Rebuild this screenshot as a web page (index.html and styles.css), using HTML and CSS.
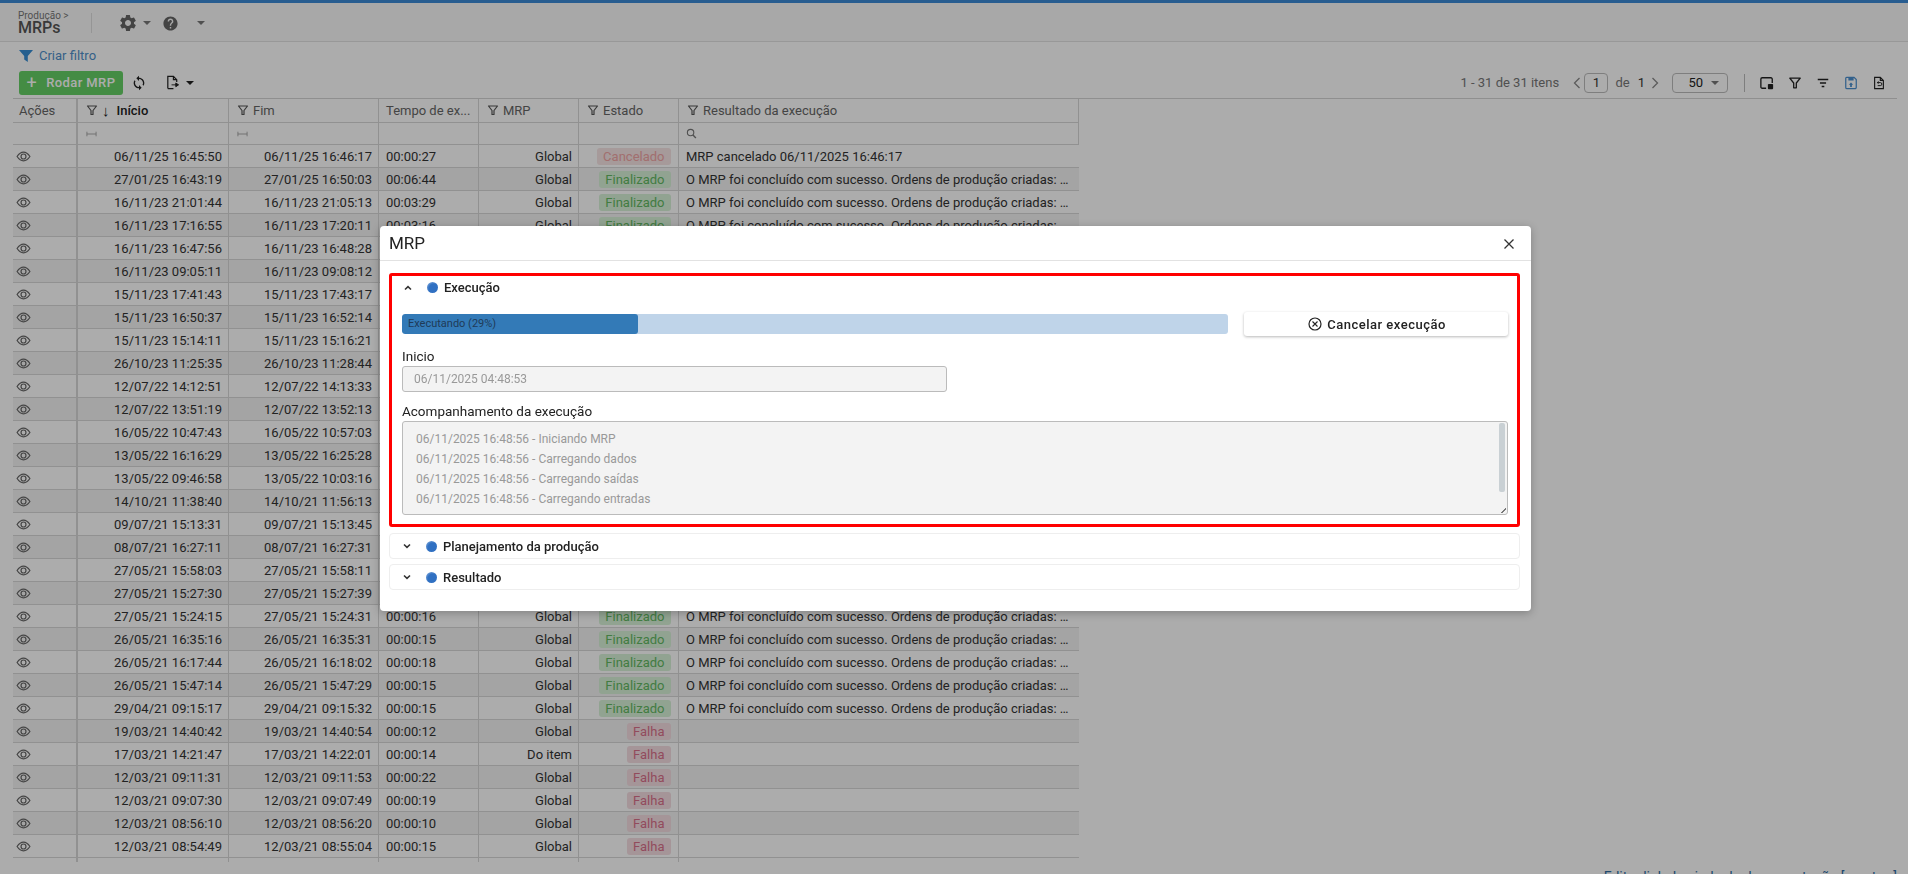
FILE: index.html
```html
<!DOCTYPE html>
<html lang="pt-BR">
<head>
<meta charset="utf-8">
<title>MRPs</title>
<link rel="stylesheet" href="styles.css">
</head>
<body>
<svg class="defs" aria-hidden="true">
  <symbol id="i-eye" viewBox="0 0 16 12"><path d="M1 6c2-3 4.500-4.800 7-4.800S13 3 15 6c-2 3-4.500 4.800-7 4.800S3 9 1 6z" fill="none" stroke="currentColor" stroke-width="1.300"/><circle cx="8" cy="6" r="2.700" fill="none" stroke="currentColor" stroke-width="1.300"/></symbol>
  <symbol id="i-filter" viewBox="0 0 12 12"><path d="M1.500 2h9L7 6.500V10.500H5V6.500z" fill="none" stroke="currentColor" stroke-width="1.200" stroke-linejoin="round"/></symbol>
  <symbol id="i-range" viewBox="0 0 12 8"><path d="M1 1.500v5M11 1.500v5M1 4h10" fill="none" stroke="currentColor" stroke-width=".9"/></symbol>
  <symbol id="i-search" viewBox="0 0 12 12"><circle cx="5" cy="5" r="3.500" fill="none" stroke="currentColor" stroke-width="1.200"/><path d="M7.600 7.600l3.200 3.400" stroke="currentColor" stroke-width="1.500"/></symbol>
  <symbol id="i-gear" viewBox="0 0 24 24"><path fill="currentColor" d="M19.140 12.940c.04-.3.06-.61.06-.94 0-.32-.02-.64-.07-.94l2.030-1.580a.49.49 0 0 0 .12-.61l-1.920-3.320a.488.488 0 0 0-.59-.22l-2.390.96c-.5-.38-1.030-.7-1.620-.94l-.36-2.540a.484.484 0 0 0-.48-.41h-3.840c-.24 0-.43.17-.47.41l-.36 2.540c-.59.24-1.130.57-1.620.94l-2.390-.96c-.22-.08-.47 0-.59.22L2.740 8.870c-.12.21-.08.47.12.61l2.030 1.580c-.05.3-.09.63-.09.94s.02.64.07.94l-2.030 1.580a.49.49 0 0 0-.12.61l1.920 3.320c.12.22.37.29.59.22l2.390-.96c.5.38 1.030.7 1.620.94l.36 2.540c.05.24.24.41.48.41h3.840c.24 0 .44-.17.47-.41l.36-2.540c.59-.24 1.130-.56 1.620-.94l2.390.96c.22.08.47 0 .59-.22l1.920-3.320c.12-.22.07-.47-.12-.61l-2.010-1.580zM12 15.600c-1.980 0-3.600-1.620-3.600-3.600s1.620-3.600 3.600-3.600 3.600 1.620 3.600 3.600-1.620 3.600-3.600 3.600z"/></symbol>
  <symbol id="i-help" viewBox="0 0 24 24"><path fill="currentColor" d="M12 2C6.480 2 2 6.480 2 12s4.480 10 10 10 10-4.480 10-10S17.520 2 12 2zm1 17h-2v-2h2v2zm2.070-7.750l-.9.92C13.450 12.900 13 13.500 13 15h-2v-.5c0-1.100.45-2.100 1.170-2.830l1.240-1.260c.37-.36.59-.86.59-1.410 0-1.100-.9-2-2-2s-2 .9-2 2H8c0-2.210 1.790-4 4-4s4 1.790 4 4c0 .88-.36 1.680-.93 2.250z"/></symbol>
  <symbol id="i-sync" viewBox="0 0 24 24"><path fill="currentColor" d="M12 4V1L8 5l4 4V6c3.310 0 6 2.690 6 6 0 1.010-.25 1.970-.7 2.800l1.460 1.460C19.540 15.030 20 13.570 20 12c0-4.420-3.580-8-8-8zm0 14c-3.310 0-6-2.690-6-6 0-1.010.25-1.970.7-2.800L5.240 7.740C4.460 8.970 4 10.430 4 12c0 4.420 3.580 8 8 8v3l4-4-4-4v3z"/></symbol>
  <symbol id="i-export" viewBox="0 0 16 16"><path d="M3 14.500V1.500h6l3.500 3.500v2.500M9 1.500V5h3.500M3 14.500h6" fill="none" stroke="currentColor" stroke-width="1.300"/><path d="M7 10.500h6M11.500 8.500l3 2-3 2z" fill="currentColor" stroke="currentColor"/></symbol>
  <symbol id="i-panel" viewBox="0 0 16 16"><path d="M7 14H2.500A1.500 1.500 0 0 1 1 12.500v-9A1.500 1.500 0 0 1 2.500 2h10A1.500 1.500 0 0 1 14 3.500V8" fill="none" stroke="currentColor" stroke-width="1.500"/><rect x="9" y="9" width="6" height="6" rx="1" fill="currentColor"/></symbol>
  <symbol id="i-filter2" viewBox="0 0 16 16"><path d="M2 2.500h12L9.500 8v5.500h-3V8z" fill="none" stroke="currentColor" stroke-width="1.500" stroke-linejoin="round"/></symbol>
  <symbol id="i-lines" viewBox="0 0 16 16"><path d="M2 4h12M4.500 8h7M6.500 12h3" fill="none" stroke="currentColor" stroke-width="1.600"/></symbol>
  <symbol id="i-save" viewBox="0 0 16 16"><path d="M2 2.500A1 1 0 0 1 3 1.500h8.500L14 4v9a1.500 1.500 0 0 1-1.500 1.500h-9A1.500 1.500 0 0 1 2 13z" fill="none" stroke="currentColor" stroke-width="1.400"/><path d="M5 2h6v3H5zM8 7.500l2.500 2.500H9v2.500H7V10H5.500z" fill="currentColor"/></symbol>
  <symbol id="i-reset" viewBox="0 0 16 16"><path d="M3 14.500V1.500h6.500L13 5v9.500zM9.500 1.500V5H13" fill="none" stroke="currentColor" stroke-width="1.300"/><path d="M6 7.500h3.500a1.700 1.700 0 0 1 0 3.500H6.500M6 7.500l1.500-1.200M6 7.500l1.500 1.200" fill="none" stroke="currentColor" stroke-width="1.100"/></symbol>
  <symbol id="i-x" viewBox="0 0 12 12"><path d="M1.500 1.500l9 9M10.500 1.500l-9 9" fill="none" stroke="currentColor" stroke-width="1.300"/></symbol>
  <symbol id="i-xc" viewBox="0 0 14 14"><circle cx="7" cy="7" r="6" fill="none" stroke="currentColor" stroke-width="1.200"/><path d="M4.500 4.500l5 5M9.500 4.500l-5 5" stroke="currentColor" stroke-width="1.100"/></symbol>
  <symbol id="i-up" viewBox="0 0 8 6"><path d="M1 4.500L4 1.700l3 2.800" fill="none" stroke="currentColor" stroke-width="1.600"/></symbol>
  <symbol id="i-down" viewBox="0 0 8 6"><path d="M1 1.500L4 4.300l3-2.800" fill="none" stroke="currentColor" stroke-width="1.600"/></symbol>
  <symbol id="i-funnel" viewBox="0 0 14 12"><path d="M0 0h14L8.800 6v6L5.200 9.600V6z" fill="currentColor"/></symbol>
  <symbol id="i-lt" viewBox="0 0 8 12"><path d="M6.500 1L1.500 6l5 5" fill="none" stroke="currentColor" stroke-width="1.300"/></symbol>
  <symbol id="i-gt" viewBox="0 0 8 12"><path d="M1.500 1l5 5-5 5" fill="none" stroke="currentColor" stroke-width="1.300"/></symbol>
</svg>

<div class="topbar"></div>
<header class="appbar">
  <div class="crumbs">
    <div class="crumb">Produção &gt;</div>
    <div class="page-title">MRPs</div>
  </div>
  <div class="appbar-sep"></div>
  <svg class="app-icon"><use href="#i-gear"/></svg><span class="caret caret-a"></span>
  <svg class="app-icon help"><use href="#i-help"/></svg><span class="caret caret-b"></span>
</header>

<div class="filter-link"><svg class="funnel"><use href="#i-funnel"/></svg><span>Criar filtro</span></div>

<div class="toolbar">
  <button class="run"><span class="plus">+</span>Rodar MRP</button>
  <svg class="tool sync"><use href="#i-sync"/></svg>
  <svg class="tool export"><use href="#i-export"/></svg><span class="caret dark"></span>
  <div class="pager">
    <span class="count">1 - 31 de 31 itens</span>
    <svg class="chev"><use href="#i-lt"/></svg>
    <span class="page-box">1</span>
    <span class="de">de</span><span class="total">1</span>
    <svg class="chev next"><use href="#i-gt"/></svg>
    <span class="size">50<span class="caret"></span></span>
    <span class="pager-sep"></span>
    <svg class="grid-icon"><use href="#i-panel"/></svg>
    <svg class="grid-icon"><use href="#i-filter2"/></svg>
    <svg class="grid-icon"><use href="#i-lines"/></svg>
    <svg class="grid-icon blue"><use href="#i-save"/></svg>
    <svg class="grid-icon"><use href="#i-reset"/></svg>
  </div>
</div>

<main class="grid-wrap">
<table class="grid">
  <colgroup><col class="c0"><col class="c1"><col class="c2"><col class="c3"><col class="c4"><col class="c5"><col class="c6"></colgroup>
  <thead>
    <tr class="head">
      <th class="act">Ações</th>
      <th class="sorted"><svg class="f"><use href="#i-filter"/></svg><span class="arrow">&#8595;</span>Início</th>
      <th><svg class="f"><use href="#i-filter"/></svg>Fim</th>
      <th>Tempo de ex...</th>
      <th><svg class="f"><use href="#i-filter"/></svg>MRP</th>
      <th><svg class="f"><use href="#i-filter"/></svg>Estado</th>
      <th><svg class="f"><use href="#i-filter"/></svg>Resultado da execução</th>
    </tr>
    <tr class="filters">
      <th class="act"></th>
      <th><svg class="rng"><use href="#i-range"/></svg></th>
      <th><svg class="rng"><use href="#i-range"/></svg></th>
      <th></th><th></th><th></th>
      <th><svg class="srch"><use href="#i-search"/></svg></th>
    </tr>
  </thead>
  <tbody>
<tr><td class="act"><svg class="eye"><use href="#i-eye"/></svg></td><td class="r">06/11/25 16:45:50</td><td class="r">06/11/25 16:46:17</td><td>00:00:27</td><td class="r">Global</td><td class="r"><span class="tag st-cancel">Cancelado</span></td><td class="res">MRP cancelado 06/11/2025 16:46:17</td></tr>
<tr><td class="act"><svg class="eye"><use href="#i-eye"/></svg></td><td class="r">27/01/25 16:43:19</td><td class="r">27/01/25 16:50:03</td><td>00:06:44</td><td class="r">Global</td><td class="r"><span class="tag st-ok">Finalizado</span></td><td class="res">O MRP foi concluído com sucesso. Ordens de produção criadas: 12 e mais</td></tr>
<tr><td class="act"><svg class="eye"><use href="#i-eye"/></svg></td><td class="r">16/11/23 21:01:44</td><td class="r">16/11/23 21:05:13</td><td>00:03:29</td><td class="r">Global</td><td class="r"><span class="tag st-ok">Finalizado</span></td><td class="res">O MRP foi concluído com sucesso. Ordens de produção criadas: 12 e mais</td></tr>
<tr><td class="act"><svg class="eye"><use href="#i-eye"/></svg></td><td class="r">16/11/23 17:16:55</td><td class="r">16/11/23 17:20:11</td><td>00:03:16</td><td class="r">Global</td><td class="r"><span class="tag st-ok">Finalizado</span></td><td class="res">O MRP foi concluído com sucesso. Ordens de produção criadas: 12 e mais</td></tr>
<tr><td class="act"><svg class="eye"><use href="#i-eye"/></svg></td><td class="r">16/11/23 16:47:56</td><td class="r">16/11/23 16:48:28</td><td>00:00:32</td><td class="r">Global</td><td class="r"><span class="tag st-ok">Finalizado</span></td><td class="res">O MRP foi concluído com sucesso.</td></tr>
<tr><td class="act"><svg class="eye"><use href="#i-eye"/></svg></td><td class="r">16/11/23 09:05:11</td><td class="r">16/11/23 09:08:12</td><td>00:03:01</td><td class="r">Global</td><td class="r"><span class="tag st-ok">Finalizado</span></td><td class="res">O MRP foi concluído com sucesso.</td></tr>
<tr><td class="act"><svg class="eye"><use href="#i-eye"/></svg></td><td class="r">15/11/23 17:41:43</td><td class="r">15/11/23 17:43:17</td><td>00:01:34</td><td class="r">Global</td><td class="r"><span class="tag st-ok">Finalizado</span></td><td class="res">O MRP foi concluído com sucesso.</td></tr>
<tr><td class="act"><svg class="eye"><use href="#i-eye"/></svg></td><td class="r">15/11/23 16:50:37</td><td class="r">15/11/23 16:52:14</td><td>00:01:37</td><td class="r">Global</td><td class="r"><span class="tag st-ok">Finalizado</span></td><td class="res">O MRP foi concluído com sucesso.</td></tr>
<tr><td class="act"><svg class="eye"><use href="#i-eye"/></svg></td><td class="r">15/11/23 15:14:11</td><td class="r">15/11/23 15:16:21</td><td>00:02:10</td><td class="r">Global</td><td class="r"><span class="tag st-ok">Finalizado</span></td><td class="res">O MRP foi concluído com sucesso.</td></tr>
<tr><td class="act"><svg class="eye"><use href="#i-eye"/></svg></td><td class="r">26/10/23 11:25:35</td><td class="r">26/10/23 11:28:44</td><td>00:03:09</td><td class="r">Global</td><td class="r"><span class="tag st-ok">Finalizado</span></td><td class="res">O MRP foi concluído com sucesso.</td></tr>
<tr><td class="act"><svg class="eye"><use href="#i-eye"/></svg></td><td class="r">12/07/22 14:12:51</td><td class="r">12/07/22 14:13:33</td><td>00:00:42</td><td class="r">Global</td><td class="r"><span class="tag st-ok">Finalizado</span></td><td class="res">O MRP foi concluído com sucesso.</td></tr>
<tr><td class="act"><svg class="eye"><use href="#i-eye"/></svg></td><td class="r">12/07/22 13:51:19</td><td class="r">12/07/22 13:52:13</td><td>00:00:54</td><td class="r">Global</td><td class="r"><span class="tag st-ok">Finalizado</span></td><td class="res">O MRP foi concluído com sucesso.</td></tr>
<tr><td class="act"><svg class="eye"><use href="#i-eye"/></svg></td><td class="r">16/05/22 10:47:43</td><td class="r">16/05/22 10:57:03</td><td>00:09:20</td><td class="r">Global</td><td class="r"><span class="tag st-ok">Finalizado</span></td><td class="res">O MRP foi concluído com sucesso.</td></tr>
<tr><td class="act"><svg class="eye"><use href="#i-eye"/></svg></td><td class="r">13/05/22 16:16:29</td><td class="r">13/05/22 16:25:28</td><td>00:08:59</td><td class="r">Global</td><td class="r"><span class="tag st-ok">Finalizado</span></td><td class="res">O MRP foi concluído com sucesso.</td></tr>
<tr><td class="act"><svg class="eye"><use href="#i-eye"/></svg></td><td class="r">13/05/22 09:46:58</td><td class="r">13/05/22 10:03:16</td><td>00:16:18</td><td class="r">Global</td><td class="r"><span class="tag st-ok">Finalizado</span></td><td class="res">O MRP foi concluído com sucesso.</td></tr>
<tr><td class="act"><svg class="eye"><use href="#i-eye"/></svg></td><td class="r">14/10/21 11:38:40</td><td class="r">14/10/21 11:56:13</td><td>00:17:33</td><td class="r">Global</td><td class="r"><span class="tag st-ok">Finalizado</span></td><td class="res">O MRP foi concluído com sucesso.</td></tr>
<tr><td class="act"><svg class="eye"><use href="#i-eye"/></svg></td><td class="r">09/07/21 15:13:31</td><td class="r">09/07/21 15:13:45</td><td>00:00:14</td><td class="r">Global</td><td class="r"><span class="tag st-ok">Finalizado</span></td><td class="res">O MRP foi concluído com sucesso.</td></tr>
<tr><td class="act"><svg class="eye"><use href="#i-eye"/></svg></td><td class="r">08/07/21 16:27:11</td><td class="r">08/07/21 16:27:31</td><td>00:00:20</td><td class="r">Global</td><td class="r"><span class="tag st-ok">Finalizado</span></td><td class="res">O MRP foi concluído com sucesso.</td></tr>
<tr><td class="act"><svg class="eye"><use href="#i-eye"/></svg></td><td class="r">27/05/21 15:58:03</td><td class="r">27/05/21 15:58:11</td><td>00:00:08</td><td class="r">Global</td><td class="r"><span class="tag st-ok">Finalizado</span></td><td class="res">O MRP foi concluído com sucesso.</td></tr>
<tr><td class="act"><svg class="eye"><use href="#i-eye"/></svg></td><td class="r">27/05/21 15:27:30</td><td class="r">27/05/21 15:27:39</td><td>00:00:09</td><td class="r">Global</td><td class="r"><span class="tag st-ok">Finalizado</span></td><td class="res">O MRP foi concluído com sucesso.</td></tr>
<tr><td class="act"><svg class="eye"><use href="#i-eye"/></svg></td><td class="r">27/05/21 15:24:15</td><td class="r">27/05/21 15:24:31</td><td>00:00:16</td><td class="r">Global</td><td class="r"><span class="tag st-ok">Finalizado</span></td><td class="res">O MRP foi concluído com sucesso. Ordens de produção criadas: 12 e mais</td></tr>
<tr><td class="act"><svg class="eye"><use href="#i-eye"/></svg></td><td class="r">26/05/21 16:35:16</td><td class="r">26/05/21 16:35:31</td><td>00:00:15</td><td class="r">Global</td><td class="r"><span class="tag st-ok">Finalizado</span></td><td class="res">O MRP foi concluído com sucesso. Ordens de produção criadas: 12 e mais</td></tr>
<tr><td class="act"><svg class="eye"><use href="#i-eye"/></svg></td><td class="r">26/05/21 16:17:44</td><td class="r">26/05/21 16:18:02</td><td>00:00:18</td><td class="r">Global</td><td class="r"><span class="tag st-ok">Finalizado</span></td><td class="res">O MRP foi concluído com sucesso. Ordens de produção criadas: 12 e mais</td></tr>
<tr><td class="act"><svg class="eye"><use href="#i-eye"/></svg></td><td class="r">26/05/21 15:47:14</td><td class="r">26/05/21 15:47:29</td><td>00:00:15</td><td class="r">Global</td><td class="r"><span class="tag st-ok">Finalizado</span></td><td class="res">O MRP foi concluído com sucesso. Ordens de produção criadas: 12 e mais</td></tr>
<tr><td class="act"><svg class="eye"><use href="#i-eye"/></svg></td><td class="r">29/04/21 09:15:17</td><td class="r">29/04/21 09:15:32</td><td>00:00:15</td><td class="r">Global</td><td class="r"><span class="tag st-ok">Finalizado</span></td><td class="res">O MRP foi concluído com sucesso. Ordens de produção criadas: 12 e mais</td></tr>
<tr><td class="act"><svg class="eye"><use href="#i-eye"/></svg></td><td class="r">19/03/21 14:40:42</td><td class="r">19/03/21 14:40:54</td><td>00:00:12</td><td class="r">Global</td><td class="r"><span class="tag st-fail">Falha</span></td><td class="res"></td></tr>
<tr><td class="act"><svg class="eye"><use href="#i-eye"/></svg></td><td class="r">17/03/21 14:21:47</td><td class="r">17/03/21 14:22:01</td><td>00:00:14</td><td class="r">Do item</td><td class="r"><span class="tag st-fail">Falha</span></td><td class="res"></td></tr>
<tr><td class="act"><svg class="eye"><use href="#i-eye"/></svg></td><td class="r">12/03/21 09:11:31</td><td class="r">12/03/21 09:11:53</td><td>00:00:22</td><td class="r">Global</td><td class="r"><span class="tag st-fail">Falha</span></td><td class="res"></td></tr>
<tr><td class="act"><svg class="eye"><use href="#i-eye"/></svg></td><td class="r">12/03/21 09:07:30</td><td class="r">12/03/21 09:07:49</td><td>00:00:19</td><td class="r">Global</td><td class="r"><span class="tag st-fail">Falha</span></td><td class="res"></td></tr>
<tr><td class="act"><svg class="eye"><use href="#i-eye"/></svg></td><td class="r">12/03/21 08:56:10</td><td class="r">12/03/21 08:56:20</td><td>00:00:10</td><td class="r">Global</td><td class="r"><span class="tag st-fail">Falha</span></td><td class="res"></td></tr>
<tr><td class="act"><svg class="eye"><use href="#i-eye"/></svg></td><td class="r">12/03/21 08:54:49</td><td class="r">12/03/21 08:55:04</td><td>00:00:15</td><td class="r">Global</td><td class="r"><span class="tag st-fail">Falha</span></td><td class="res"></td></tr>
<tr class="stub"><td class="act"></td><td></td><td></td><td></td><td></td><td></td><td class="res"></td></tr>
  </tbody>
</table>
</main>
<footer class="page-foot">Editar link de ajuda da documentação [mostrar]</footer>

<div class="overlay"></div>
<section class="modal">
  <div class="modal-head"><h2>MRP</h2><svg class="close"><use href="#i-x"/></svg></div>
  <div class="modal-body">
    <div class="acc open">
      <div class="acc-head"><svg class="chev-i"><use href="#i-up"/></svg><span class="globe"></span><span class="acc-title">Execução</span></div>
      <div class="acc-body">
        <div class="progress-row">
          <div class="progress"><div class="bar" style="width:28.6%">Executando (29%)</div></div>
          <button class="cancel"><svg class="xc"><use href="#i-xc"/></svg>Cancelar execução</button>
        </div>
        <label class="lbl first">Inicio</label>
        <div class="input">06/11/2025 04:48:53</div>
        <label class="lbl">Acompanhamento da execução</label>
        <div class="log">
          <div>06/11/2025 16:48:56 - Iniciando MRP</div>
          <div>06/11/2025 16:48:56 - Carregando dados</div>
          <div>06/11/2025 16:48:56 - Carregando saídas</div>
          <div>06/11/2025 16:48:56 - Carregando entradas</div>
          <span class="thumb"></span><span class="grip"></span>
        </div>
      </div>
    </div>
    <div class="acc closed">
      <div class="acc-head"><svg class="chev-i"><use href="#i-down"/></svg><span class="globe"></span><span class="acc-title">Planejamento da produção</span></div>
    </div>
    <div class="acc closed">
      <div class="acc-head"><svg class="chev-i"><use href="#i-down"/></svg><span class="globe"></span><span class="acc-title">Resultado</span></div>
    </div>
  </div>
</section>
</body>
</html>
```
FILE: styles.css
```css
* { box-sizing: border-box; }
html, body { margin: 0; height: 874px; overflow: hidden; }
body { background: #fff; font-family: Roboto, "Liberation Sans", sans-serif; font-size: 13px; color: #333; }
svg { display: block; }
.defs { position: absolute; width: 0; height: 0; }

.topbar { height: 3px; background: #3c8bd6; }
.appbar { height: 39px; display: flex; align-items: center; padding: 2px 0 0 18px; background: #fafafa; border-bottom: 1px solid #e2e2e2; }
.crumbs { width: 73px; margin-top: -1px; }
.crumb { font-size: 10px; line-height: 11px; color: #777; margin-top: -1px; }
.page-title { font-size: 16px; line-height: 14px; font-weight: 500; color: #555; }
.appbar-sep { width: 1px; height: 20px; background: #ddd; }
.app-icon { width: 20px; height: 20px; margin-left: 26px; color: #666; }
.app-icon.help { width: 17px; height: 17px; margin-left: 11px; }
.caret { display: inline-block; width: 0; height: 0; border: 4px solid transparent; border-top-color: #777; border-bottom: 0; }
.caret-a { margin-left: 5px; }
.caret-b { margin-left: 18px; }
.caret.dark { border-top-color: #222; margin-left: 6px; }

.filter-link { height: 28px; display: flex; align-items: center; padding: 0 0 1px 19px; color: #4f8fca; font-size: 13px; }
.funnel { width: 14px; height: 12px; color: #388ed4; margin-right: 6px; }

.toolbar { height: 28px; display: flex; align-items: center; padding: 0 22px 3px 19px; }
.run { width: 104px; height: 24px; padding: 0; border: 0; border-radius: 3px; background: #66d066; color: #fff; font: 500 13px Roboto, sans-serif; letter-spacing: .4px; display: flex; align-items: center; justify-content: center; }
.plus { font-size: 18px; font-weight: 400; line-height: 18px; margin-right: 9px; }
.tool { color: #222; }
.sync { width: 16px; height: 16px; margin-left: 8px; }
.export { width: 15px; height: 15px; margin-left: 18px; }
.pager { margin-left: auto; display: flex; align-items: center; color: #777; font-size: 13px; }
.count { width: 98px; white-space: nowrap; }
.chev { width: 8px; height: 12px; margin-left: 15px; color: #888; }
.chev.next { margin-left: 6px; }
.page-box { width: 24px; height: 20px; margin-left: 3px; border: 1px solid #bbb; border-radius: 4px; background: #fff; color: #333; text-align: center; line-height: 17px; font-size: 13px; }
.de { margin-left: 7px; }
.total { margin-left: 8px; color: #333; }
.size { width: 56px; height: 20px; margin-left: 13px; border: 1px solid #bbb; border-radius: 4px; color: #222; font-size: 13px; display: flex; align-items: center; justify-content: flex-end; gap: 8px; padding-right: 8px; }
.pager-sep { width: 1px; height: 18px; margin: 0 15px 0 16px; background: #bbb; }
.grid-icon { width: 14px; height: 14px; margin-right: 14px; color: #222; }
.grid-icon:last-child { margin-right: 0; }
.grid-icon.blue { color: #4b8fcf; }

.grid-wrap { margin: 0 11px 0 13px; border-top: 1px solid #d4d4d4; }
.grid { border-collapse: separate; border-spacing: 0; table-layout: fixed; width: 1066px; }
.c0 { width: 65px; } .c1 { width: 151px; } .c2 { width: 150px; } .c3 { width: 100px; } .c4 { width: 100px; } .c5 { width: 100px; } .c6 { width: 400px; }
th, td { padding: 0 7px; border-right: 1px solid #d8d8d8; border-bottom: 1px solid #d8d8d8; white-space: nowrap; overflow: hidden; text-overflow: ellipsis; }
th { font-weight: 400; text-align: left; color: #666; padding-left: 7px; }
.head th { height: 24px; }
.head th svg, .arrow { display: inline-block; vertical-align: -1px; }
.filters th { height: 22px; }
.act { border-right-width: 2px; padding-left: 6px; }
.sorted { color: #222; font-weight: 500; }
.f { width: 12px; height: 12px; margin-right: 4px; margin-left: 1px; color: #555; }
.arrow { font-size: 15px; line-height: 12px; margin-right: 7px; color: #222; font-weight: 400; }
.rng { width: 11px; height: 8px; color: #999; margin-left: 1px; }
.srch { width: 11px; height: 11px; color: #777; margin-left: 0; }
tbody td { height: 23px; line-height: 21px; color: #333; }
tbody tr:nth-child(even) td { background: #f4f4f4; }
tbody td.act { padding-left: 3px; }
td.r { text-align: right; padding-right: 6px; }
.res { padding-right: 8px; }
tbody td.res { border-right: 0; }
.eye { width: 15px; height: 11px; color: #666; }
.tag { display: inline-block; height: 17px; line-height: 17px; padding: 0 6.500px; margin-right: 1px; border-radius: 3px; font-size: 13px; font-weight: 400; vertical-align: top; margin-top: 2px; }
.st-ok { background: #d8f2d8; color: #62b862; }
.st-cancel { background: #f6e4e4; color: #f0a5a5; }
.st-fail { background: #f5dde2; color: #d9708a; }
tr.stub td { height: 4px; line-height: 0; border-bottom: 0; background: none !important; }

.page-foot { margin-top: 7px; padding-right: 11px; text-align: right; font-size: 14px; line-height: 16px; color: #2e6da4; }

.overlay { position: fixed; inset: 0; background: rgba(0,0,0,.325); }
.modal { position: absolute; left: 380px; top: 226px; width: 1151px; background: #fff; border-radius: 4px; box-shadow: 0 2px 8px rgba(0,0,0,.25); color: #222; }
.modal-head { height: 35px; display: flex; align-items: center; justify-content: space-between; padding: 0 16px 0 9px; border-bottom: 1px solid #e2e2e2; }
.modal-head h2 { margin: 0; font-size: 17px; line-height: 20px; font-weight: 400; color: #222; }
.close { width: 12px; height: 12px; color: #333; margin-top: 1px; }
.modal-body { padding: 12px 11px 21px 9px; }
.acc { border-radius: 4px; }
.acc.open { border: 3px solid #f00; border-radius: 3px; }
.acc.closed { border: 1px solid #eee; height: 26px; margin-top: 5px; }
.acc.open + .acc.closed { margin-top: 6px; }
.acc-head { height: 24px; display: flex; align-items: center; padding-left: 13px; }
.acc.open .acc-head { height: 23px; padding-left: 12px; }
.chev-i { width: 8px; height: 6px; color: #333; margin-right: 15px; }
.globe { width: 11px; height: 11px; border-radius: 50%; margin-right: 6px; background: radial-gradient(circle at 62% 62%, #3070c2 0 50%, #5c8fd0 70%, #c4d6ee 90%); }
.acc-title { font-size: 13px; font-weight: 500; color: #222; }
.acc-body { padding: 13px 9px 9px 10px; }
.progress-row { display: flex; align-items: center; justify-content: space-between; }
.progress { width: 826px; height: 20px; border-radius: 3px; background: #bfd4e9; overflow: hidden; }
.bar { height: 20px; padding-left: 6px; line-height: 20px; background: #337ab7; border-radius: 3px; color: #1f3b57; font-size: 11px; white-space: nowrap; }
.cancel { width: 264px; height: 24px; padding: 0 0 0 2px; border: 0; border-radius: 3px; background: #fff; box-shadow: 0 1px 3px rgba(0,0,0,.28); font: 500 13px Roboto, sans-serif; letter-spacing: .5px; color: #222; display: flex; align-items: center; justify-content: center; }
.xc { width: 14px; height: 14px; margin-right: 5px; color: #222; }
.lbl { display: block; margin: 11px 0 2px; font-size: 13.500px; line-height: 16px; color: #222; }
.lbl.first { margin-top: 12px; }
.input { width: 545px; height: 26px; padding: 0 11px; line-height: 24px; border: 1px solid #bbb; border-radius: 3px; background: #f3f3f3; color: #999; font-size: 12px; }
.log { position: relative; height: 94px; padding: 7px 13px; border: 1px solid #bbb; border-radius: 3px; background: #f3f3f3; color: #999; font-size: 12px; line-height: 20px; }
.thumb { position: absolute; right: 2px; top: 1px; width: 6px; height: 69px; border-radius: 2px; background: #c9d0d4; }
.grip { position: absolute; right: 1px; bottom: 1px; width: 6px; height: 6px; background: linear-gradient(135deg, #f3f3f3 55%, #777 55% 70%, #f3f3f3 70%); }
```
